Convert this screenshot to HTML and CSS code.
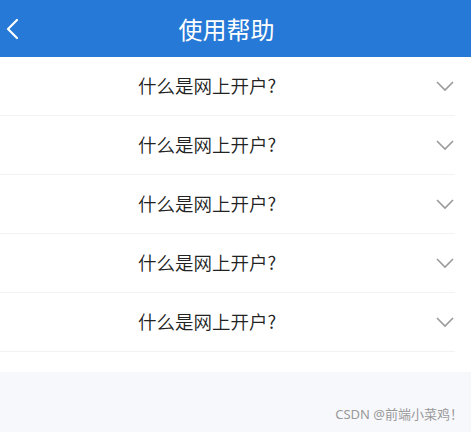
FILE: index.html
```html
<!DOCTYPE html>
<html lang="zh-CN">
<head>
<meta charset="utf-8">
<title>使用帮助</title>
<link rel="stylesheet" href="styles.css">
</head>
<body>
<div class="page">
  <header class="header">
    <span class="back">
      <svg width="14" height="22" viewBox="0 0 14 22"><polyline points="11,2 2,11 11,20" fill="none" stroke="#fff" stroke-width="2.2" stroke-linecap="round" stroke-linejoin="round"/></svg>
    </span>
    <h1 class="title">使用帮助</h1>
  </header>
  <main class="list">
    <div class="row"><span class="q">什么是网上开户?</span><svg class="arrow" width="18" height="12" viewBox="0 0 18 12"><polyline points="1,2 9,10 17,2" fill="none" stroke="#9a9a9a" stroke-width="1.6"/></svg></div>
    <div class="row"><span class="q">什么是网上开户?</span><svg class="arrow" width="18" height="12" viewBox="0 0 18 12"><polyline points="1,2 9,10 17,2" fill="none" stroke="#9a9a9a" stroke-width="1.6"/></svg></div>
    <div class="row"><span class="q">什么是网上开户?</span><svg class="arrow" width="18" height="12" viewBox="0 0 18 12"><polyline points="1,2 9,10 17,2" fill="none" stroke="#9a9a9a" stroke-width="1.6"/></svg></div>
    <div class="row"><span class="q">什么是网上开户?</span><svg class="arrow" width="18" height="12" viewBox="0 0 18 12"><polyline points="1,2 9,10 17,2" fill="none" stroke="#9a9a9a" stroke-width="1.6"/></svg></div>
    <div class="row"><span class="q">什么是网上开户?</span><svg class="arrow" width="18" height="12" viewBox="0 0 18 12"><polyline points="1,2 9,10 17,2" fill="none" stroke="#9a9a9a" stroke-width="1.6"/></svg></div>
  </main>
  <footer class="foot">CSDN @前端小菜鸡！</footer>
</div>
</body>
</html>
```
FILE: styles.css
```css
html, body {
  margin: 0;
  padding: 0;
  height: 100%;
}
body {
  background: #f7f8fc;
  font-family: "Noto Sans CJK SC", "Noto Sans", sans-serif;
}
.page {
  display: flex;
  flex-direction: column;
  min-height: 432px;
}
.header {
  height: 57px;
  background: #2679d6;
  display: flex;
  align-items: center;
  padding-left: 6px;
}
.back {
  display: flex;
  width: 14px;
}
.title {
  flex: 1;
  margin: 0;
  padding-right: 38px;
  text-align: center;
  color: #fff;
  font-size: 24px;
  font-weight: 400;
  line-height: 1;
}
.list {
  background: #fff;
  padding-bottom: 20px;
}
.row {
  width: 455px;
  height: 58px;
  border-bottom: 1px solid #f2f2f2;
  display: flex;
  align-items: center;
  box-sizing: content-box;
}
.q {
  flex: 1;
  text-align: center;
  padding-right: 6px;
  padding-bottom: 3px;
  font-size: 18.5px;
  font-weight: 350;
  color: #222;
}
.arrow {
  margin-right: 1px;
  margin-left: 16px;
}
.foot {
  margin-top: auto;
  text-align: right;
  padding: 0 8px 9px 0;
  font-size: 13px;
  color: #999;
  font-family: "Noto Sans", "Noto Sans CJK SC", sans-serif;
}
```
